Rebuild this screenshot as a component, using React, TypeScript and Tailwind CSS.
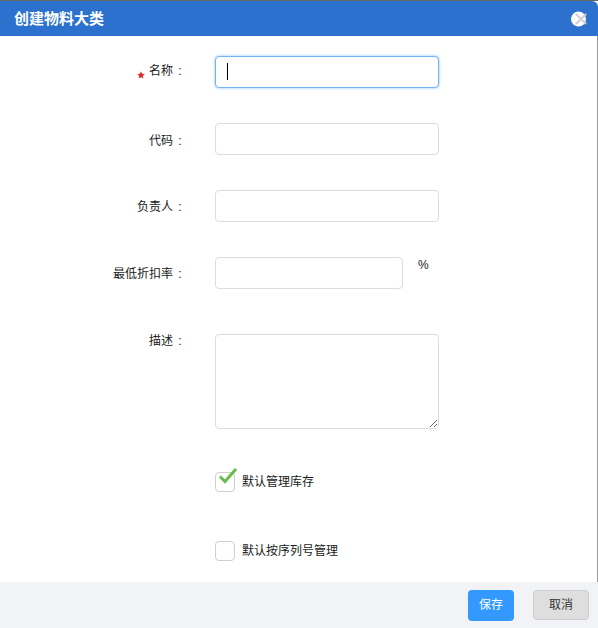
import React from "react";

const font = "font-['Liberation_Sans','Noto_Sans_CJK_SC',sans-serif]";

const inputCls = "block h-8 rounded-[4px] border bg-white outline-none";

const Label = ({ text, required, h }: { text: string; required?: boolean; h: string }) => (
  <div className={`w-[186px] shrink-0 flex justify-end items-center text-[12px] leading-none text-[#1a1a1a] ${h}`}>
    {required && (
      <svg width="8" height="8" viewBox="0 0 24 24" className="mr-[4px] mt-[8px]">
        <path fill="#e02b2b" d="M12 1l3.2 7.6 8.3.7-6.3 5.4 1.9 8.1L12 18.5l-7.1 4.3 1.9-8.1L.5 9.3l8.3-.7z" />
      </svg>
    )}
    <span>{text}</span>
    <span className="w-[12px] text-center ml-[1px]">:</span>
  </div>
);

const Check = ({ text, checked }: { text: string; checked?: boolean }) => (
  <div className="ml-[215px] flex items-center h-[20px] text-[12px] text-[#1a1a1a]">
    <div className="relative w-5 h-5 rounded-[4px] border border-[#cfcfcf] bg-white">
      {checked && (
        <svg width="22" height="20" viewBox="0 0 22 20" className="absolute left-[1px] top-[-6px]">
          <path d="M3 9.5l5 5L19 2" fill="none" stroke="#68bd4c" strokeWidth="3" />
        </svg>
      )}
    </div>
    <span className="ml-[7px]">{text}</span>
  </div>
);

export default function App() {
  return (
    <div className={`${font} w-[598px] h-[628px] flex flex-col bg-white overflow-hidden border-t border-t-[#666]`}>
      <div className="h-[35px] shrink-0 bg-[#2b71cd] rounded-tr-[6px] flex items-center justify-between pl-[14px] pr-[9px]">
        <h1 className="text-[15px] font-bold text-white leading-none">创建物料大类</h1>
        <svg width="18" height="18" viewBox="0 0 18 18">
          <circle cx="7.5" cy="9" r="7.5" fill="#fff" />
          <path d="M5 4l10 10M15 4L5 14" stroke="#d2cfcf" strokeWidth="2" />
        </svg>
      </div>

      <div className="flex-1 flex flex-col border-r border-r-[#999]">
        <div className="flex items-start h-8 mt-[20px]">
          <Label text="名称" required h="h-[30px]" />
          <div className="relative ml-[29px]">
            <input className={`${inputCls} w-[224px] border-[#74b4f0] shadow-[0_0_3px_#8cc2f5]`} />
            <span className="absolute left-[12px] top-[7px] w-px h-[17px] bg-black" />
          </div>
        </div>

        <div className="flex items-start h-8 mt-[35px]">
          <Label text="代码" h="h-[35px]" />
          <input className={`${inputCls} ml-[29px] w-[224px] border-[#dcdcdc]`} />
        </div>

        <div className="flex items-start h-8 mt-[35px]">
          <Label text="负责人" h="h-[34px]" />
          <input className={`${inputCls} ml-[29px] w-[224px] border-[#dcdcdc]`} />
        </div>

        <div className="flex items-start h-8 mt-[35px]">
          <Label text="最低折扣率" h="h-[33px]" />
          <input className={`${inputCls} ml-[29px] w-[188px] border-[#dcdcdc]`} />
          <span className="ml-[15px] mt-[1px] text-[12px] leading-[14px] text-[#1a1a1a]">%</span>
        </div>

        <div className="flex items-start mt-[45px]">
          <Label text="描述" h="h-[14px]" />
          <textarea className="block ml-[29px] w-[224px] h-[95px] rounded-[4px] border border-[#dcdcdc] bg-white outline-none resize" />
        </div>

        <div className="mt-[43px]">
          <Check text="默认管理库存" checked />
        </div>
        <div className="mt-[49px]">
          <Check text="默认按序列号管理" />
        </div>
      </div>

      <div className="h-[46px] shrink-0 bg-[#f2f3f7] flex items-center justify-end pr-[9px] gap-[19px]">
        <button className="w-[46px] h-[31px] rounded-[4px] bg-[#3399ff] text-white text-[12px]">保存</button>
        <button className="w-[56px] h-[30px] rounded-[4px] bg-[#dedede] border border-[#cccccc] text-[#333] text-[12px]">取消</button>
      </div>
    </div>
  );
}
